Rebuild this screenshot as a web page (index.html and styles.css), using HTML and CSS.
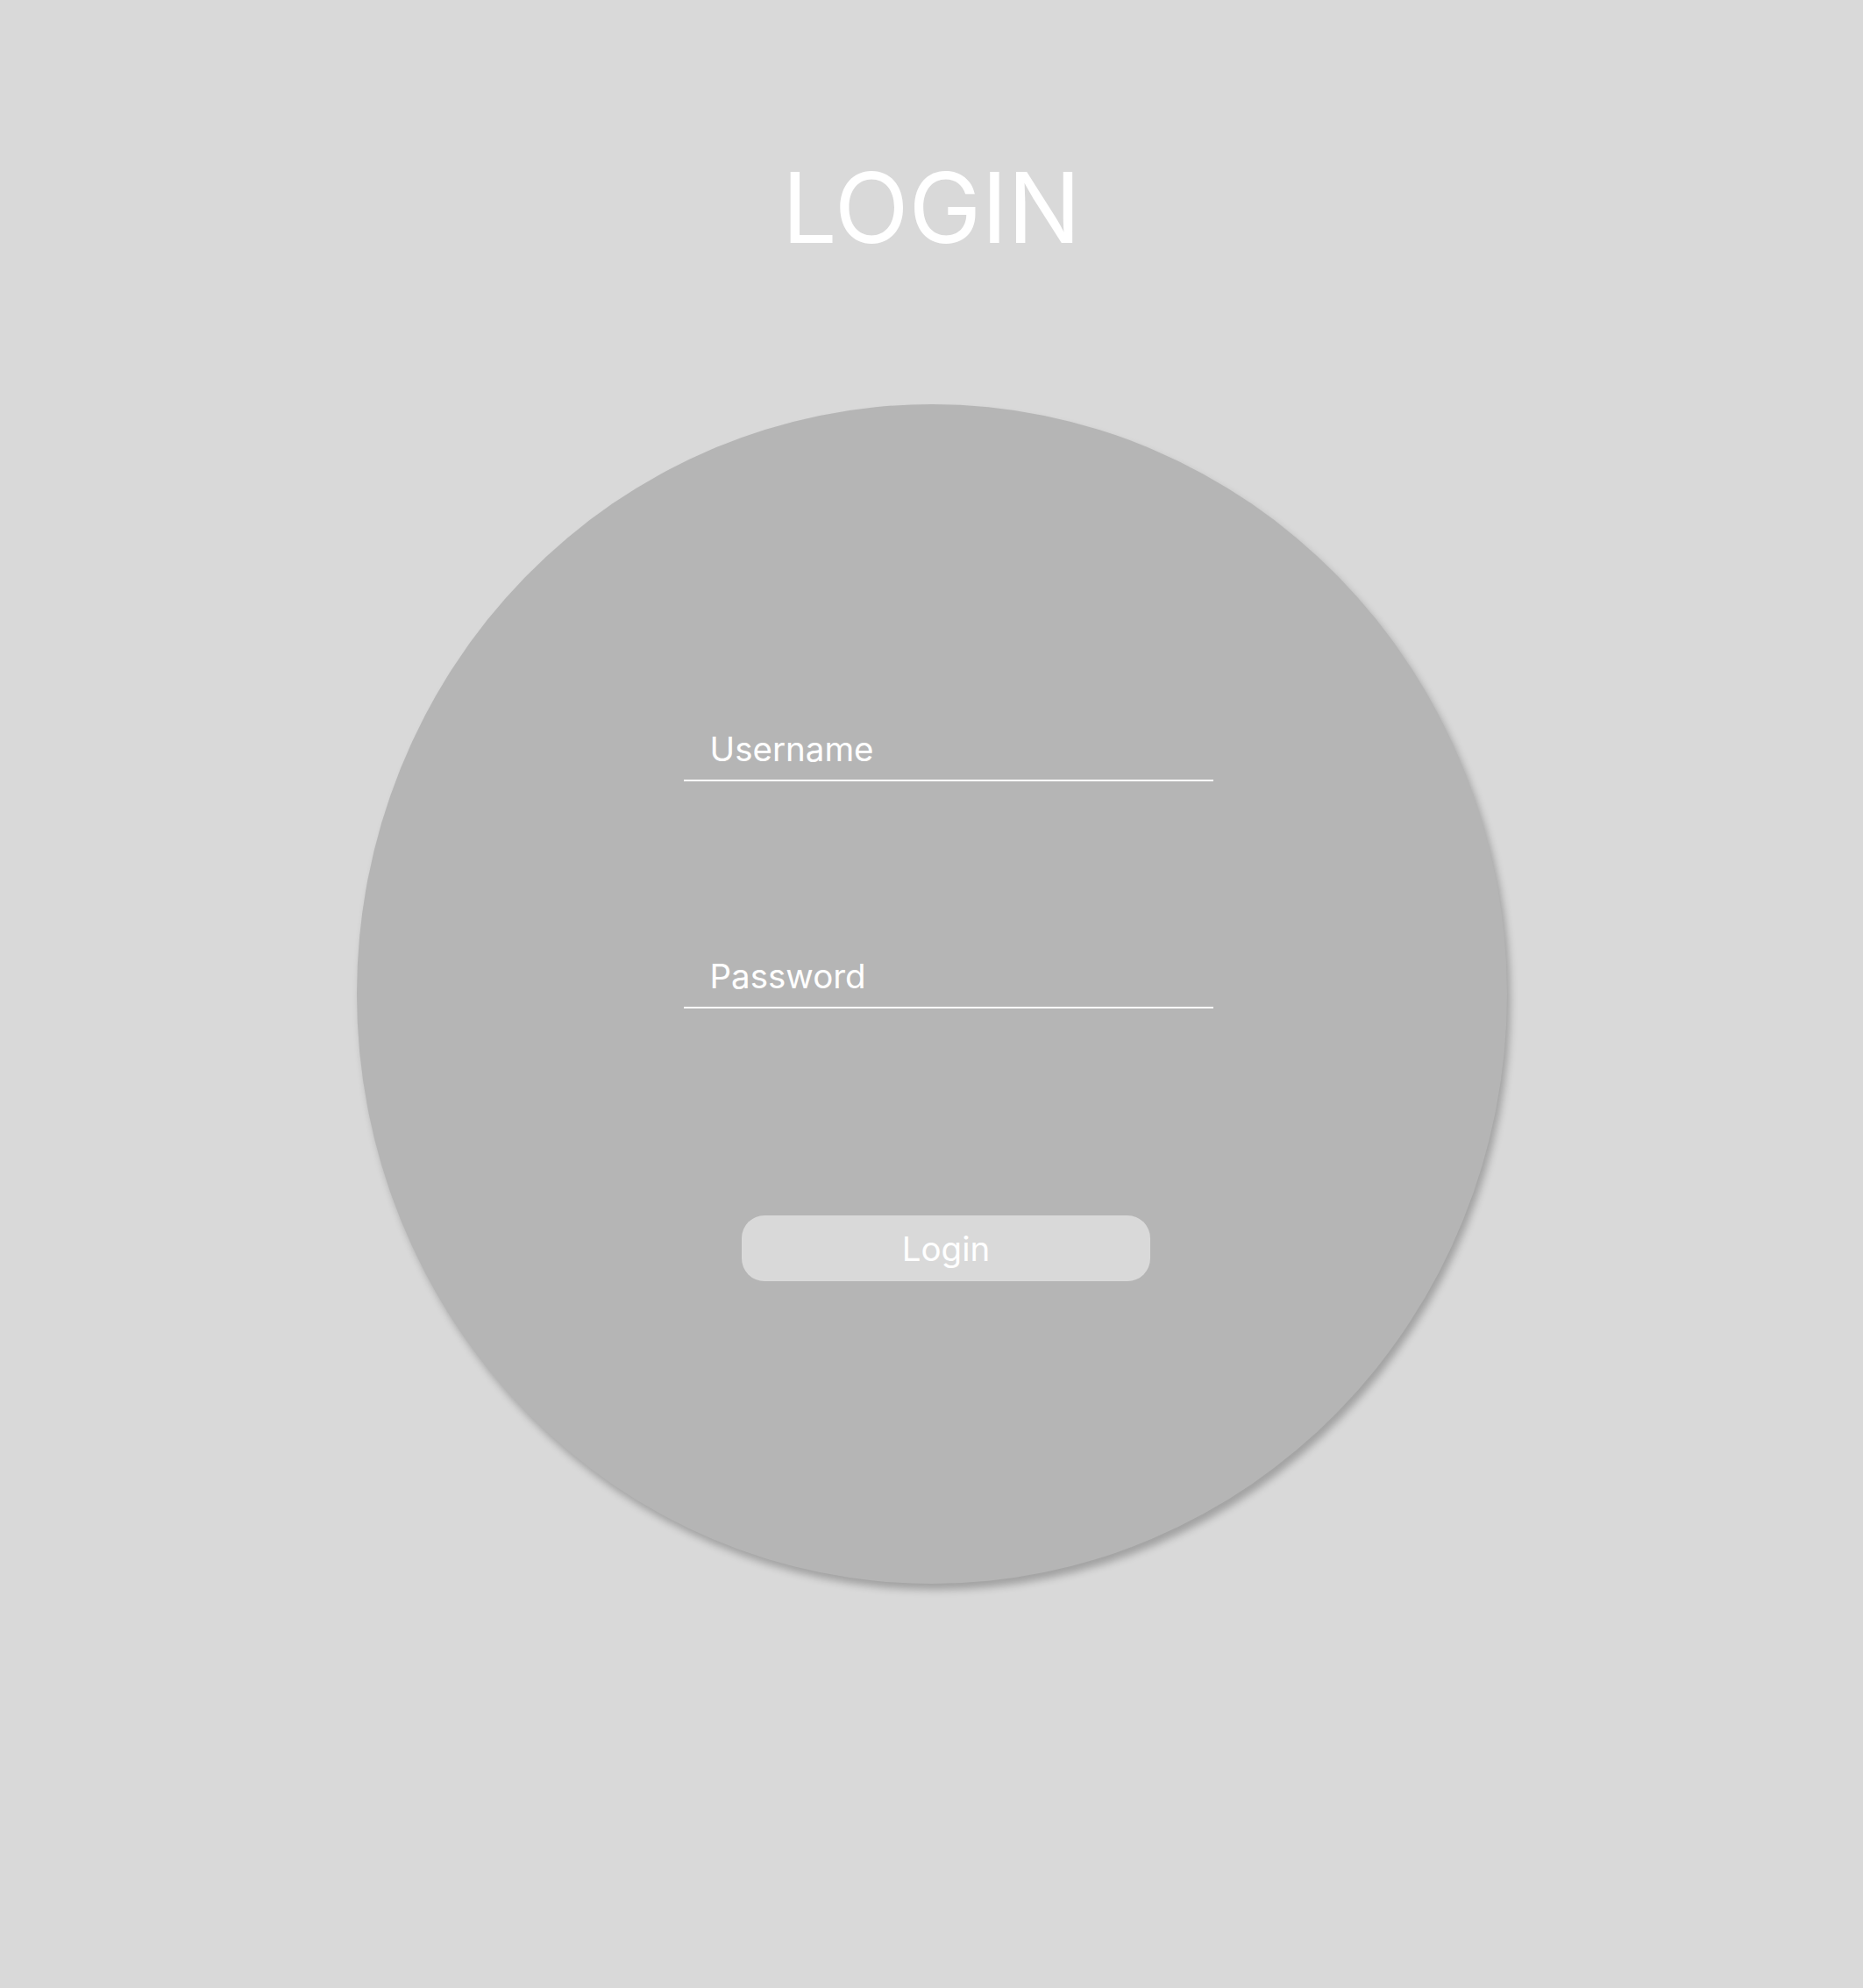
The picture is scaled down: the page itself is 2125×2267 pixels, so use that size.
FILE: index.html
```html
<!DOCTYPE html>
<html lang="en">

<head>
  <meta charset="UTF-8">
  <meta name="viewport" content="width=device-width, initial-scale=1.0">
  <title>Login</title>
  <link rel="stylesheet" href="styles.css">
</head>

<body>
  <section class="page">
    <h1 class="title">LOGIN</h1>

    <div class="circle">
      <form class="login-form">
        <div class="field">
          <input id="username" name="username" type="text" placeholder="Username" />
        </div>

        <div class="field field-password">
          <input id="password" name="password" type="password" placeholder="Password" />
        </div>

        <button class="login-button" type="button">Login</button>
      </form>
    </div>
  </section>
</body>

</html>
```

FILE: styles.css
```css
* {
  font-family: 'Inter', 'Noto Sans', sans-serif;
  box-sizing: border-box;
}

body {
  margin: 0;
  background: #d9d9d9;
}

.page {
  display: flex;
  flex-direction: column;
  align-items: center;
  min-height: 2267px;
}

.title {
  margin: 170px 0 0;
  color: white;
  font-size: 111px;
  font-weight: 400;
  line-height: 133px;
}

.circle {
  width: 1312px;
  height: 1345px;
  margin-top: 158px;
  border-radius: 50%;
  background: #b5b5b5;
  box-shadow: 4px 7px 8px rgba(0, 0, 0, 0.25);
  display: flex;
  justify-content: center;
  padding: 369px 0 0 38px;
}

.login-form {
  width: 604px;
  display: flex;
  flex-direction: column;
  align-items: center;
}

.field {
  width: 100%;
  padding: 0 0 11px 30px;
  border-bottom: 2px solid white;
}

.field-password {
  margin-top: 198px;
}

.field input {
  width: 100%;
  height: 48px;
  padding: 0;
  background: transparent;
  border: none;
  outline: none;
  color: white;
  font-size: 38.5px;
  line-height: 48px;
}

.field input::placeholder {
  color: white;
  opacity: 1;
}

.login-button {
  width: 466px;
  height: 75px;
  margin: 236px 5px 0 0;
  border: none;
  border-radius: 26px;
  background: #d9d9d9;
  color: white;
  font-size: 38.5px;
  cursor: pointer;
}
```
